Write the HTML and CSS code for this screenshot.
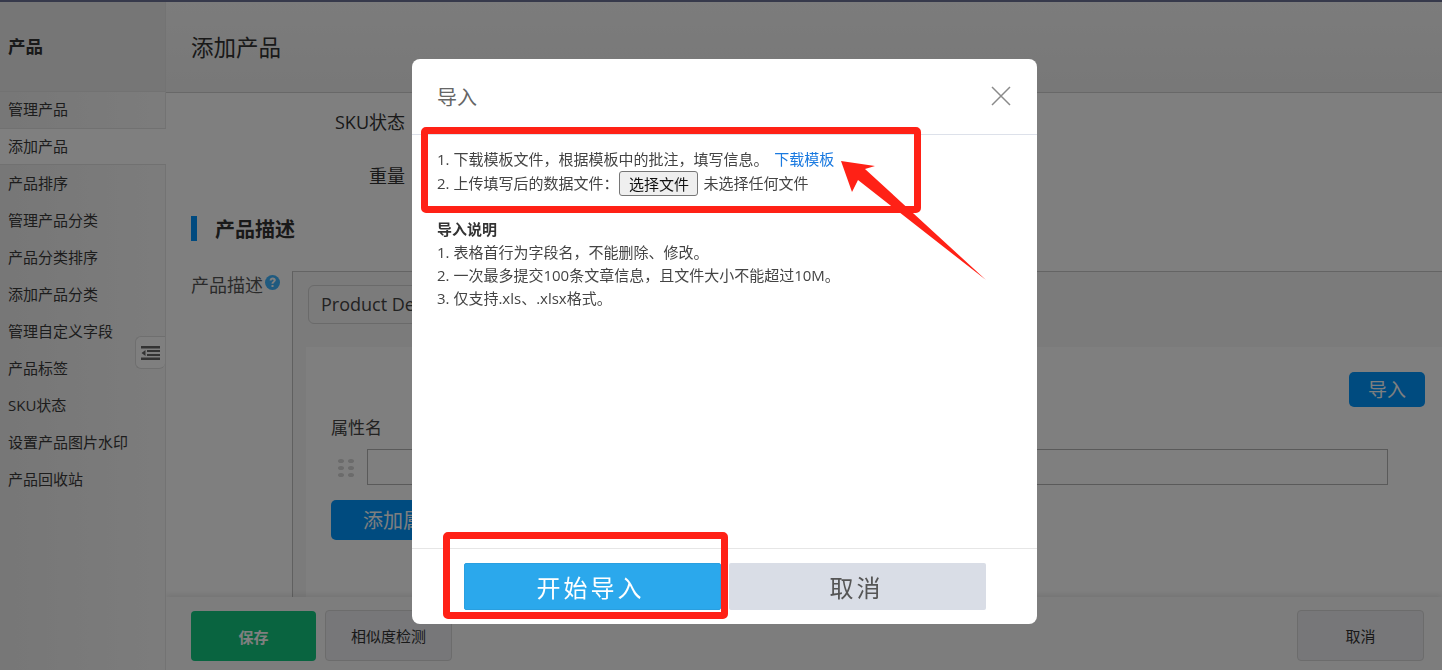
FILE: index.html
```html
<!DOCTYPE html>
<html lang="zh-CN">
<head>
<meta charset="utf-8">
<title>添加产品</title>
<link rel="stylesheet" href="styles.css">
</head>
<body>
<div class="topline"></div>
<div class="app">
  <aside class="sidebar">
    <div class="side-title">产品</div>
    <nav class="side-nav">
      <a class="side-item">管理产品</a>
      <a class="side-item active">添加产品</a>
      <a class="side-item">产品排序</a>
      <a class="side-item">管理产品分类</a>
      <a class="side-item">产品分类排序</a>
      <a class="side-item">添加产品分类</a>
      <a class="side-item">管理自定义字段</a>
      <a class="side-item">产品标签</a>
      <a class="side-item">SKU状态</a>
      <a class="side-item">设置产品图片水印</a>
      <a class="side-item">产品回收站</a>
    </nav>
    <div class="collapse-tab">
      <svg width="19" height="14" viewBox="0 0 19 14"><path class="ico" d="M0 0h19v2.500H0zM6 4h13v2H6zM6 8h13v2H6zM0 11.500h19V14H0zM4.500 4v6L0.500 7z"/></svg>
    </div>
  </aside>
  <main class="main">
    <header class="page-head"><h1>添加产品</h1></header>
    <div class="content">
      <div class="form-row"><label class="row-label">SKU状态</label></div>
      <div class="form-row"><label class="row-label">重量</label></div>
      <h2 class="section-title">产品描述</h2>
      <div class="desc-row">
        <div class="desc-label">产品描述
          <svg class="help" width="15" height="15" viewBox="0 0 15 15"><circle cx="7.500" cy="7.500" r="7.500" class="help-bg"/><path class="help-q" d="M4.600 5.500C4.700 3.700 6 2.500 7.800 2.500c1.700 0 3 1.100 3 2.600 0 1.100-.7 1.700-1.500 2.300-.6.400-.8.700-.8 1.400H6.500c0-1.200.4-1.800 1.200-2.400.6-.4.900-.7.900-1.200 0-.5-.4-.8-.9-.8-.6 0-1 .4-1.100 1.100zM6.500 10h2v2h-2z"/></svg>
        </div>
        <div class="desc-box">
          <div class="tab-field">Product De</div>
          <div class="attr-panel">
            <div class="import-line"><button class="btn-import">导入</button></div>
            <div class="attr-label">属性名</div>
            <div class="attr-row">
              <svg class="drag" width="16" height="18" viewBox="0 0 16 18"><g class="dots"><ellipse cx="3" cy="2" rx="3" ry="2"/><ellipse cx="13" cy="2" rx="3" ry="2"/><ellipse cx="3" cy="9" rx="3" ry="2"/><ellipse cx="13" cy="9" rx="3" ry="2"/><ellipse cx="3" cy="16" rx="3" ry="2"/><ellipse cx="13" cy="16" rx="3" ry="2"/></g></svg>
              <div class="attr-input"></div>
            </div>
            <button class="btn-add">添加属性</button>
          </div>
        </div>
      </div>
    </div>
    <footer class="action-bar">
      <button class="btn-save">保存</button>
      <button class="btn-plain">相似度检测</button>
      <button class="btn-plain btn-cancel">取消</button>
    </footer>
  </main>
</div>
<div class="mask"></div>
<section class="modal">
  <div class="modal-head">
    <span>导入</span>
    <svg class="close" width="20" height="20" viewBox="0 0 20 20"><path d="M1 1l18 18M19 1L1 19"/></svg>
  </div>
  <div class="modal-body">
    <div class="steps">
      <p>1. 下载模板文件，根据模板中的批注，填写信息。 <a class="link">下载模板</a></p>
      <p class="file-line"><span class="file-text">2. 上传填写后的数据文件：</span><span class="file-btn">选择文件</span><span>未选择任何文件</span></p>
    </div>
    <div class="notes">
      <p class="notes-title">导入说明</p>
      <p>1. 表格首行为字段名，不能删除、修改。</p>
      <p>2. 一次最多提交100条文章信息，且文件大小不能超过10M。</p>
      <p>3. 仅支持.xls、.xlsx格式。</p>
    </div>
  </div>
  <div class="modal-foot">
    <button class="btn-start">开始导入</button>
    <button class="btn-off">取消</button>
  </div>
</section>
<div class="mark mark-top"></div>
<div class="mark mark-bottom"></div>
<svg class="arrow" width="1442" height="670" viewBox="0 0 1442 670"><polygon points="841,161 875,166 865,169 986,280 858,180 852,192"/></svg>
</body>
</html>
```
FILE: styles.css
```css
* { box-sizing: border-box; }
html, body { margin: 0; height: 670px; overflow: hidden; }
body {
  font-family: "Open Sans", "Noto Sans CJK SC", sans-serif;
  color: #333;
  background: #fff;
}
button { font-family: inherit; cursor: pointer; }
p, h1, h2 { margin: 0; font-weight: normal; }

.topline { height: 2px; background: #6d7296; }
.app { display: flex; height: 668px; }

/* Sidebar */
.sidebar {
  position: relative;
  width: 166px;
  flex: none;
  background: linear-gradient(90deg, #eeeeee, #f9f9f9);
  border-right: 1px solid #e6e6e6;
}
.side-title {
  height: 90px;
  padding-left: 8px;
  font-size: 17.500px;
  font-weight: 700;
  line-height: 88px;
  color: #333;
  background: #ededed;
  border-bottom: 1px solid #e4e4e4;
}
.side-nav { display: flex; flex-direction: column; margin-right: -1px; }
.side-item {
  height: 37px;
  padding-left: 8px;
  font-size: 15px;
  line-height: 36px;
  color: #3a3a3a;
}
.side-item:first-child { line-height: 34px; border-bottom: 1px solid #e2e2e2; }
.side-item.active { position: relative; height: 36px; line-height: 34px; background: #fff; border-bottom: 1px solid #e2e2e2; }
.collapse-tab {
  position: absolute;
  top: 334px;
  right: 0;
  display: flex;
  align-items: center;
  justify-content: center;
  width: 30px;
  height: 33px;
  background: #fff;
  border: 1px solid #dedede;
  border-right: 0;
  border-radius: 6px 0 6px 6px;
}
.ico { fill: #666; }

/* Main */
.main { flex: 1; min-width: 0; display: flex; flex-direction: column; overflow: hidden; }
.page-head {
  flex: none;
  height: 91px;
  padding-left: 25px;
  background: linear-gradient(180deg, #f8f8f8, #f0f0f0);
  border-bottom: 1px solid #d0d0d0;
}
.page-head h1 { font-size: 22.500px; line-height: 92px; color: #333; }
.content { flex: 1; min-height: 0; padding-top: 2px; overflow: hidden; }
.form-row { display: flex; justify-content: flex-end; width: 239px; height: 54px; align-items: center; }
.row-label { font-size: 18px; line-height: 24px; color: #333; }
.section-title {
  margin: 13px 0 30px 25px;
  padding-left: 18px;
  height: 25px;
  font-size: 20px;
  font-weight: 700;
  line-height: 27px;
  color: #333;
  border-left: 6px solid #0094ff;
}
.desc-row { display: flex; height: 400px; padding-left: 25px; }
.desc-label {
  width: 101px;
  flex: none;
  padding-top: 1px;
  font-size: 18px;
  line-height: 26px;
  color: #555;
  white-space: nowrap;
}
.help { vertical-align: 2px; margin-left: -3px; }
.help-bg { fill: #3eb4ff; }
.help-q { fill: #fff; }
.desc-box {
  flex: 1;
  padding: 13px 0 0 13px;
  background: #f6f6f6;
  border-top: 1px solid #c9c9c9;
  border-left: 1px solid #c0c0c0;
}
.tab-field {
  width: 320px;
  height: 39px;
  margin-left: 2px;
  padding-left: 12px;
  font-size: 18px;
  line-height: 37px;
  color: #444;
  white-space: nowrap;
  background: #f6f6f6;
  border: 1px solid #d4d4d4;
  border-radius: 6px;
}
.attr-panel { margin-top: 23px; height: 300px; padding: 25px 54px 0 25px; background: #fff; }
.import-line { display: flex; justify-content: flex-end; height: 35px; margin-right: -37px; }
.btn-import {
  width: 76px;
  height: 35px;
  padding: 0 0 2px;
  font-size: 19px;
  color: #fff;
  background: #0096ff;
  border: 0;
  border-radius: 5px;
}
.attr-label { margin-top: 8px; font-size: 17px; line-height: 26px; color: #444; }
.attr-row { display: flex; align-items: center; margin-top: 8px; height: 36px; gap: 13px; padding-left: 7px; }
.drag { flex: none; margin-top: 2px; }
.dots { fill: #d6d6d6; }
.attr-input { flex: 1; height: 36px; background: #fff; border: 1px solid #b5b5b5; }
.btn-add {
  display: block;
  width: 144px;
  height: 40px;
  margin-top: 15px;
  padding: 0 0 2px;
  font-size: 20px;
  color: #fff;
  background: #0096ff;
  border: 0;
  border-radius: 5px;
}
.action-bar {
  flex: none;
  position: relative;
  display: flex;
  align-items: flex-start;
  gap: 9px;
  height: 73px;
  padding: 13px 18px 0 25px;
  background: #fbfbfb;
  box-shadow: 0 -3px 5px rgba(0, 0, 0, .08);
}
.btn-save {
  width: 125px;
  height: 50px;
  margin-top: 1px;
  padding: 0;
  font-size: 15px;
  font-weight: 700;
  color: #fff;
  background: #12c880;
  border: 0;
  border-radius: 4px;
}
.btn-plain {
  width: 127px;
  height: 51px;
  padding: 0;
  font-size: 15px;
  color: #333;
  background: #eeeff2;
  border: 1px solid #d8d8d8;
  border-radius: 4px;
}
.btn-cancel { margin-left: auto; }

/* Mask and modal */
.mask { position: fixed; inset: 0; background: rgba(0, 0, 0, .5); }
.modal {
  position: fixed;
  top: 59px;
  left: 412px;
  display: flex;
  flex-direction: column;
  width: 625px;
  height: 565px;
  color: #444;
  background: #fff;
  border-radius: 8px;
}
.modal-head {
  display: flex;
  align-items: center;
  justify-content: space-between;
  flex: none;
  height: 76px;
  padding: 0 26px 0 25px;
  font-size: 20px;
  color: #666;
  border-bottom: 1px solid #dde1ea;
}
.close { fill: none; stroke: #8a8a8a; stroke-width: 1.500; margin-top: -2px; }
.modal-body { flex: 1; padding: 13px 25px 0; font-size: 15px; line-height: 23px; }
.steps { height: 69px; }
.link { margin-left: 2px; color: #1a7ae0; }
.file-line { display: flex; align-items: center; height: 25px; white-space: pre; }
.file-text { margin-right: 1px; }
.file-btn {
  width: 79px;
  height: 25px;
  margin-right: 5px;
  font-size: 15px;
  line-height: 25px;
  text-align: center;
  color: #111;
  background: #efefef;
  border: 1px solid #767676;
  border-radius: 3px;
}
.notes { margin-top: 1px; }
.notes-title { font-weight: 700; color: #333; }
.modal-foot {
  flex: none;
  display: flex;
  gap: 8px;
  height: 76px;
  padding: 14px 0 0 52px;
  border-top: 1px solid #e6e6e6;
}
.btn-start, .btn-off {
  width: 257px;
  height: 47px;
  font-size: 24px;
  letter-spacing: 3px;
  border-radius: 2px;
}
.btn-start { padding: 0 4px 0 0; color: #fff; background: #2ba8ec; border: 1px solid #2a9fe0; }
.btn-off { padding: 0 2px 0 0; color: #555; background: #d9dde6; border: 0; }

/* Red annotations */
.mark { position: fixed; border: 7px solid #ff2116; border-radius: 5px; }
.mark-top { top: 127px; left: 421px; width: 500px; height: 86px; }
.mark-bottom { top: 532px; left: 443px; width: 285px; height: 87px; }
.arrow { position: fixed; top: 0; left: 0; pointer-events: none; fill: #ff2116; }
```
